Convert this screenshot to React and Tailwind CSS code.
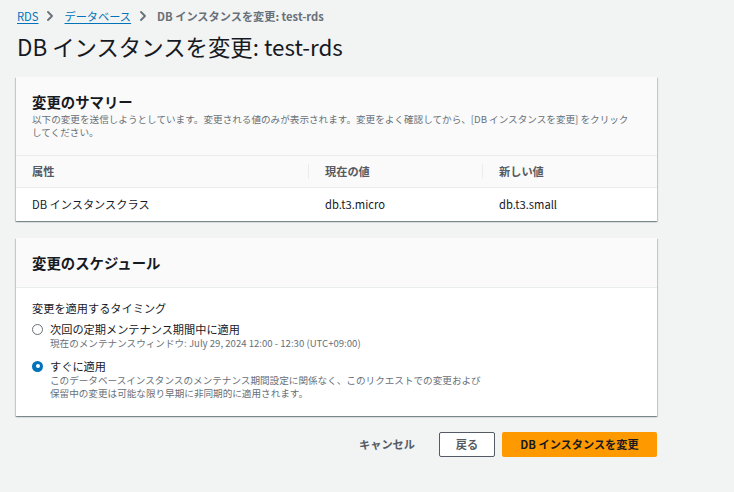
import React from "react";

const Chevron = () => (
  <svg width="8" height="10" viewBox="0 0 8 10" className="mx-[8px]" fill="none">
    <path d="M2 1l4 4-4 4" stroke="#687078" strokeWidth="1.8" strokeLinecap="round" strokeLinejoin="round" />
  </svg>
);

const Radio = ({ checked }) =>
  checked ? (
    <span className="flex h-[11px] w-[11px] shrink-0 items-center justify-center rounded-full bg-[#0073bb]">
      <span className="h-[4px] w-[4px] rounded-full bg-white" />
    </span>
  ) : (
    <span className="h-[11px] w-[11px] shrink-0 rounded-full border-[1.5px] border-[#687078] bg-white" />
  );

const cardShadow =
  "shadow-[0_1px_1px_0_rgba(0,28,36,0.3),1px_1px_1px_0_rgba(0,28,36,0.15),-1px_1px_1px_0_rgba(0,28,36,0.15)]";

const App = () => {
  return (
    <div className="min-h-screen w-full bg-[#f2f3f3] px-4 text-[#16191f] font-['Noto_Sans_CJK_JP',sans-serif]">
      {/* breadcrumb */}
      <div className="flex h-[14px] items-center pt-[9px] box-content text-[11.2px] leading-[14px]">
        <span className="text-[#0073bb] underline underline-offset-2 ml-px">RDS</span>
        <Chevron />
        <span className="text-[#0073bb] underline underline-offset-2 ml-[2px]">データベース</span>
        <Chevron />
        <span className="font-bold text-[#687078] ml-[2px]">DB インスタンスを変更: test-rds</span>
      </div>

      <h1 className="mt-[9px] ml-px h-[28px] text-[22.4px] leading-[28px] font-normal">DB インスタンスを変更: test-rds</h1>

      <div className="w-[641px]">
        {/* summary card */}
        <div className={`mt-[17px] bg-white ${cardShadow}`}>
          <div className="border-b border-[#eaeded] bg-[#fafafa] pl-4 pr-[24px] pt-[15px] pb-[16px]">
            <h2 className="h-[20px] text-[14.4px] leading-[20px] font-bold">変更のサマリー</h2>
            <p className="mt-px text-[9.6px] leading-[13px] text-[#687078]">
              以下の変更を送信しようとしています。変更される値のみが表示されます。変更をよく確認してから、[DB インスタンスを変更] をクリックしてください。
            </p>
          </div>
          <div className="grid grid-cols-[292px_174px_1fr] border-b border-[#eaeded] bg-[#fafafa] text-[11.2px] font-bold text-[#545b64]">
            <div className="flex h-[31px] items-center px-4">属性</div>
            <div className="flex h-[31px] items-center">
              <span className="h-[15px] w-px bg-[#eaeded]" />
              <span className="pl-4">現在の値</span>
            </div>
            <div className="flex h-[31px] items-center">
              <span className="h-[15px] w-px bg-[#eaeded]" />
              <span className="pl-4">新しい値</span>
            </div>
          </div>
          <div className="grid grid-cols-[292px_174px_1fr] text-[11.2px]">
            <div className="flex h-[33px] items-center px-4">DB インスタンスクラス</div>
            <div className="flex h-[33px] items-center pl-[17px]">db.t3.micro</div>
            <div className="flex h-[33px] items-center pl-[17px]">db.t3.small</div>
          </div>
        </div>

        {/* schedule card */}
        <div className={`mt-[17px] bg-white ${cardShadow}`}>
          <div className="flex h-[50px] items-center border-b border-[#eaeded] bg-[#fafafa] px-4">
            <h2 className="text-[14.4px] leading-[20px] font-bold">変更のスケジュール</h2>
          </div>
          <div className="px-4 pt-[14px] pb-[16px]">
            <div className="text-[11.2px] leading-[13px]">変更を適用するタイミング</div>
            <div className="mt-[6px]">
              <div className="flex h-[16px] items-center gap-[7px] text-[11.2px]">
                <Radio />
                <span>次回の定期メンテナンス期間中に適用</span>
              </div>
              <div className="pl-[18px] text-[9.6px] leading-[13px] text-[#687078]">
                現在のメンテナンスウィンドウ: July 29, 2024 12:00 - 12:30 (UTC+09:00)
              </div>
            </div>
            <div className="mt-[8px]">
              <div className="flex h-[16px] items-center gap-[7px] text-[11.2px]">
                <Radio checked />
                <span>すぐに適用</span>
              </div>
              <div className="pl-[18px] text-[9.6px] leading-[13px] text-[#687078]">
                このデータベースインスタンスのメンテナンス期間設定に関係なく、このリクエストでの変更および
                <br />
                保留中の変更は可能な限り早期に非同期的に適用されます。
              </div>
            </div>
          </div>
        </div>

        {/* actions */}
        <div className="mt-[16px] flex items-center justify-end">
          <button className="mr-[24px] text-[11.2px] font-bold text-[#545b64]">キャンセル</button>
          <button className="mr-[7px] h-[25px] w-[56px] rounded-[2px] border border-[#545b64] bg-white text-[11.2px] font-bold text-[#545b64]">
            戻る
          </button>
          <button className="h-[25px] w-[155px] rounded-[2px] bg-[#ff9900] text-[11.2px] font-bold text-[#16191f]">
            DB インスタンスを変更
          </button>
        </div>
      </div>
    </div>
  );
};

export default App;
